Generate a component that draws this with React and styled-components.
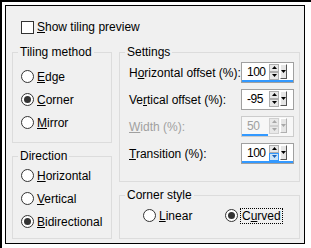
import React from "react";
import styled, { createGlobalStyle } from "styled-components";

const GlobalStyle = createGlobalStyle`
  html, body {
    margin: 0;
    padding: 0;
    background: #ffffff;
  }
  body {
    font-family: "Liberation Sans", Arial, sans-serif;
    font-size: 12px;
    color: #000;
  }
`;

const Frame = styled.div`
  width: 311px;
  height: 248px;
  box-sizing: border-box;
  border-top: 2px solid #000;
  border-left: 2px solid #000;
  padding: 3px 0 0 3px;
  background: #ffffff;
`;

const Dialog = styled.div`
  width: 300px;
  height: 239px;
  box-sizing: border-box;
  border: 1px solid #000;
  background: #f0f0f0;
  display: flex;
  flex-direction: column;
  padding: 13px 0 0 6px;
`;

const CheckRow = styled.label`
  display: flex;
  align-items: center;
  gap: 3px;
  height: 16px;
  margin-left: 9px;
  line-height: 16px;
  white-space: nowrap;
`;

const CheckBox = styled.span`
  width: 13px;
  height: 13px;
  box-sizing: border-box;
  border: 1px solid #333;
  background: #fff;
  flex: none;
`;

const Columns = styled.div`
  display: grid;
  grid-template-columns: 100px 181px;
  column-gap: 7px;
  margin-top: 9px;
`;

const Column = styled.div`
  display: flex;
  flex-direction: column;
  gap: 5px;
`;

const Group = styled.fieldset`
  margin: 0;
  padding: 0;
  min-width: 0;
  height: ${(p) => p.$h}px;
  box-sizing: border-box;
  border: 1px solid #dcdcdc;
`;

const Legend = styled.legend`
  padding: 0 2px;
  margin-left: 5px;
  line-height: 16px;
  height: 16px;
  white-space: nowrap;
`;

const RadioList = styled.div`
  display: flex;
  flex-direction: ${(p) => (p.$row ? "row" : "column")};
  padding: ${(p) => p.$top}px 0 0 ${(p) => p.$left}px;
`;

const RadioRow = styled.div`
  display: flex;
  align-items: center;
  gap: 3px;
  height: 23px;
  width: ${(p) => (p.$w ? `${p.$w}px` : "auto")};
  flex: none;
  white-space: nowrap;
`;

const Circle = styled.span`
  width: 13px;
  height: 13px;
  box-sizing: border-box;
  border: 1px solid #333;
  border-radius: 50%;
  background: #fff;
  display: flex;
  align-items: center;
  justify-content: center;
  flex: none;

  &::after {
    content: "";
    width: 7px;
    height: 7px;
    border-radius: 50%;
    background: #333;
    display: ${(p) => (p.$on ? "block" : "none")};
  }
`;

const Focus = styled.span`
  outline: 1px dotted #000;
  outline-offset: 0;
  padding: 0 1px;
  line-height: 14px;
`;

const Settings = styled.div`
  display: flex;
  flex-direction: column;
  padding: 0 5px 0 9px;
  margin-top: -1px;
`;

const FieldRow = styled.div`
  display: flex;
  align-items: center;
  justify-content: space-between;
  height: 27px;
  white-space: nowrap;
  color: ${(p) => (p.$disabled ? "#a0a0a0" : "#000")};
`;

const SpinBox = styled.div`
  flex: none;
  width: 53px;
  height: 21px;
  box-sizing: border-box;
  border: 1px solid ${(p) => (p.$disabled ? "#cccccc" : "#a0a0a0")};
  background: ${(p) => (p.$disabled ? "#f7f7f7" : "#ffffff")};
  display: flex;
  flex-direction: column;
`;

const SpinTop = styled.div`
  flex: 1;
  display: flex;
  align-items: center;
  padding: 0 6px 0 5px;
`;

const Value = styled.span`
  flex: 1;
  line-height: 16px;
  letter-spacing: -0.5px;
  color: ${(p) => (p.$disabled ? "#a0a0a0" : "#000")};
`;

const Arrows = styled.div`
  flex: none;
  display: flex;
  flex-direction: column;
  margin-right: 1px;
`;

const ArrowBtn = styled.span`
  width: 10px;
  height: 8px;
  box-sizing: border-box;
  border: 1px solid ${(p) => (p.$hot ? "#3399ff" : p.$disabled ? "#d0d0d0" : "#adadad")};
  background: ${(p) => (p.$hot ? "#cce4f7" : "#e8e8e8")};
  display: flex;
  align-items: center;
  justify-content: center;
`;

const DropBtn = styled.span`
  flex: none;
  width: 7px;
  height: 15px;
  box-sizing: border-box;
  border-top: 1px solid #fff;
  border-left: 1px solid #fff;
  border-right: 1px solid ${(p) => (p.$disabled ? "#b0b0b0" : "#555")};
  border-bottom: 1px solid ${(p) => (p.$disabled ? "#b0b0b0" : "#555")};
  background: #e6e6e6;
  display: flex;
  align-items: center;
  justify-content: center;
`;

const ValueBar = styled.div`
  height: 2px;
  background: #3399ff;
`;

const Tri = ({ dir, color }) => (
  <svg width="5" height="3" viewBox="0 0 5 3">
    {dir === "up" ? (
      <polygon points="2.5,0 5,3 0,3" fill={color} />
    ) : (
      <polygon points="0,0 5,0 2.5,3" fill={color} />
    )}
  </svg>
);

const Spin = ({ value, disabled, hotDown }) => {
  const pct = Math.max(0, Math.min(100, Number(value)));
  const ink = disabled ? "#a8a8a8" : "#000";
  return (
    <SpinBox $disabled={disabled}>
      <SpinTop>
        <Value $disabled={disabled}>{value}</Value>
        <Arrows>
          <ArrowBtn $disabled={disabled}>
            <Tri dir="up" color={ink} />
          </ArrowBtn>
          <ArrowBtn $disabled={disabled} $hot={hotDown}>
            <Tri dir="down" color={hotDown ? "#1a5fb4" : ink} />
          </ArrowBtn>
        </Arrows>
        <DropBtn $disabled={disabled}>
          <Tri dir="down" color={ink} />
        </DropBtn>
      </SpinTop>
      <ValueBar style={{ width: `${pct}%` }} />
    </SpinBox>
  );
};

const Radio = ({ on, children, w }) => (
  <RadioRow $w={w}>
    <Circle $on={on} />
    <span>{children}</span>
  </RadioRow>
);

export default function App() {
  return (
    <>
      <GlobalStyle />
      <Frame>
        <Dialog>
          <CheckRow>
            <CheckBox />
            <span>
              <u>S</u>how tiling preview
            </span>
          </CheckRow>
          <Columns>
            <Column>
              <Group $h={99}>
                <Legend>Tiling method</Legend>
                <RadioList $top={5} $left={8}>
                  <Radio>
                    <u>E</u>dge
                  </Radio>
                  <Radio on>
                    <u>C</u>orner
                  </Radio>
                  <Radio>
                    <u>M</u>irror
                  </Radio>
                </RadioList>
              </Group>
              <Group $h={91}>
                <Legend>Direction</Legend>
                <RadioList $top={0} $left={8}>
                  <Radio>
                    <u>H</u>orizontal
                  </Radio>
                  <Radio>
                    <u>V</u>ertical
                  </Radio>
                  <Radio on>
                    <u>B</u>idirectional
                  </Radio>
                </RadioList>
              </Group>
            </Column>
            <Column>
              <Group $h={138}>
                <Legend>Settings</Legend>
                <Settings>
                  <FieldRow>
                    <span>
                      H<u>o</u>rizontal offset (%):
                    </span>
                    <Spin value="100" />
                  </FieldRow>
                  <FieldRow>
                    <span>
                      Ve<u>r</u>tical offset (%):
                    </span>
                    <Spin value="-95" />
                  </FieldRow>
                  <FieldRow $disabled>
                    <span>
                      <u>W</u>idth (%):
                    </span>
                    <Spin value="50" disabled />
                  </FieldRow>
                  <FieldRow>
                    <span>
                      <u>T</u>ransition (%):
                    </span>
                    <Spin value="100" hotDown />
                  </FieldRow>
                </Settings>
              </Group>
              <Group $h={52}>
                <Legend>Corner style</Legend>
                <RadioList $row $top={1} $left={23}>
                  <Radio w={82}>
                    <u>L</u>inear
                  </Radio>
                  <Radio on>
                    <Focus>
                      C<u>u</u>rved
                    </Focus>
                  </Radio>
                </RadioList>
              </Group>
            </Column>
          </Columns>
        </Dialog>
      </Frame>
    </>
  );
}
